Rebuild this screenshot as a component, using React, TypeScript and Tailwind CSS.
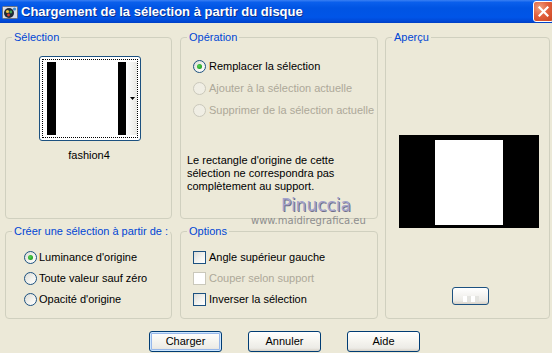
import React from "react";

function Radio({ checked = false, disabled = false }: { checked?: boolean; disabled?: boolean }) {
  return (
    <span
      className={
        "relative inline-flex w-[13px] h-[13px] shrink-0 items-center justify-center rounded-full border " +
        (disabled
          ? "border-[#CAC8BB] bg-[#F0EEE4]"
          : "border-[#1C5180] bg-[linear-gradient(135deg,#DCDCD5_0%,#F4F4F0_60%,#FFFFFF_100%)]")
      }
    >
      {checked && (
        <span className="w-[5px] h-[5px] rounded-full bg-[radial-gradient(circle_at_40%_40%,#55D155_0%,#21A121_70%,#1A8A1A_100%)]" />
      )}
    </span>
  );
}

function Check({ disabled = false }: { disabled?: boolean }) {
  return (
    <span
      className={
        "inline-block w-[13px] h-[13px] shrink-0 border " +
        (disabled
          ? "border-[#CAC8BB] bg-white"
          : "border-[#1C5180] bg-[linear-gradient(135deg,#DCDCD7_0%,#F5F5F2_60%,#FFFFFF_100%)]")
      }
    />
  );
}

function Group({
  label,
  className,
  children,
}: {
  label: string;
  className: string;
  children?: React.ReactNode;
}) {
  return (
    <fieldset className={"border border-[#D0D0BF] rounded-[4px] min-w-0 " + className}>
      <legend className="ml-[6px] px-[2px] leading-[13px] text-[#0046D5]">{label}</legend>
      {children}
    </fieldset>
  );
}

function XpButton({ label, isDefault = false }: { label: string; isDefault?: boolean }) {
  return (
    <button
      className={
        "w-[73px] h-[21px] rounded-[3px] border border-[#003C74] text-[11px] leading-none text-black bg-[linear-gradient(to_bottom,#FFFFFF_0%,#F5F4EF_50%,#ECEBE6_85%,#D6D0C5_100%)] " +
        (isDefault ? "shadow-[inset_0_0_0_1px_#CEE7FF,inset_0_0_0_2px_#98B8EA]" : "")
      }
    >
      {label}
    </button>
  );
}

function TitleBar() {
  return (
    <div className="relative h-[23px] flex items-center overflow-hidden bg-[linear-gradient(to_bottom,#3A80F3_0%,#0A5FEC_10%,#0054E3_35%,#0055E8_75%,#0048D6_92%,#003FC4_100%)]">
      <svg width="16" height="13" viewBox="0 0 16 13" className="ml-[2px] mt-[1px]">
        <rect x="0.5" y="0.5" width="15" height="12" rx="1" fill="#D8DCE4" stroke="#6A7280" />
        <circle cx="7" cy="7" r="5" fill="#1E2A38" />
        <circle cx="5.5" cy="5.5" r="1.6" fill="#E8C040" />
        <circle cx="8.8" cy="6" r="1.4" fill="#3FA34D" />
        <circle cx="6.5" cy="9" r="1.4" fill="#D64030" />
        <circle cx="12.5" cy="3" r="1.6" fill="#3C8FD8" />
      </svg>
      <span className="ml-[3px] text-white font-bold text-[13px] font-['Liberation_Sans',Arial,sans-serif] [text-shadow:1px_1px_0_#0A2E8C]">
        Chargement de la sélection à partir du disque
      </span>
      <div className="absolute left-[533px] top-[1px] w-[21px] h-[21px] rounded-[3px] border border-white bg-[radial-gradient(circle_at_30%_30%,#F0A080_0%,#E2603E_45%,#C84420_100%)] flex items-center justify-center">
        <svg width="11" height="11" viewBox="0 0 11 11">
          <path d="M1.5 1.5 L9.5 9.5 M9.5 1.5 L1.5 9.5" stroke="white" strokeWidth="2.2" strokeLinecap="square" />
        </svg>
      </div>
    </div>
  );
}

export default function App() {
  return (
    <div className="relative w-[552px] h-[353px] overflow-hidden bg-[#ECE9D8] text-[11px] text-black font-['Liberation_Sans',Arial,sans-serif]">
      <TitleBar />

      <div className="flex pl-[5px] pt-[8px]">
        {/* left column */}
        <div className="w-[167px] flex flex-col">
          <Group label="Sélection" className="h-[188px]">
            <div className="mt-[12px] ml-[33px] w-[102px] h-[85px] rounded-[3px] border border-[#1C5180] bg-white p-[2px]">
              <div className="w-full h-full border border-dotted border-black flex pl-[4px] py-[2px]">
                <div className="w-[9px] bg-black" />
                <div className="w-[62px] bg-white" />
                <div className="w-[8px] bg-black" />
                <div className="flex-1 flex items-center justify-end pr-[2px] bg-[linear-gradient(to_right,#FFFFFF,#E8E8E4)]">
                  <svg width="5" height="3" viewBox="0 0 5 3">
                    <path d="M0 0 H5 L2.5 3 Z" fill="black" />
                  </svg>
                </div>
              </div>
            </div>
            <div className="mt-[8px] ml-[1px] text-center leading-[13px]">fashion4</div>
          </Group>

          <Group label="Créer une sélection à partir de :" className="h-[94px] mt-[6px]">
            <div className="mt-[9px] pl-[18px] flex flex-col">
              <label className="h-[21px] flex items-center gap-[2px]">
                <Radio checked />
                <span>Luminance d'origine</span>
              </label>
              <label className="h-[21px] flex items-center gap-[2px]">
                <Radio />
                <span>Toute valeur sauf zéro</span>
              </label>
              <label className="h-[21px] flex items-center gap-[2px]">
                <Radio />
                <span>Opacité d'origine</span>
              </label>
            </div>
          </Group>
        </div>

        {/* middle column */}
        <div className="w-[198px] ml-[8px] flex flex-col">
          <Group label="Opération" className="h-[188px]">
            <div className="mt-[11px] pl-[12px] flex flex-col">
              <label className="h-[22px] flex items-center gap-[3px]">
                <Radio checked />
                <span>Remplacer la sélection</span>
              </label>
              <label className="h-[22px] flex items-center gap-[3px] text-[#ACA899]">
                <Radio disabled />
                <span>Ajouter à la sélection actuelle</span>
              </label>
              <label className="h-[22px] flex items-center gap-[3px] text-[#ACA899]">
                <Radio disabled />
                <span>Supprimer de la sélection actuelle</span>
              </label>
            </div>
            <p className="mt-[33px] pl-[6px] pr-[20px] leading-[13px]">
              Le rectangle d'origine de cette sélection ne correspondra pas complètement au support.
            </p>
          </Group>

          <Group label="Options" className="h-[94px] mt-[6px]">
            <div className="mt-[9px] pl-[12px] flex flex-col">
              <label className="h-[21px] flex items-center gap-[3px]">
                <Check />
                <span>Angle supérieur gauche</span>
              </label>
              <label className="h-[21px] flex items-center gap-[3px] text-[#ACA899]">
                <Check disabled />
                <span>Couper selon support</span>
              </label>
              <label className="h-[21px] flex items-center gap-[3px]">
                <Check />
                <span>Inverser la sélection</span>
              </label>
            </div>
          </Group>
        </div>

        {/* right column */}
        <div className="w-[165px] ml-[7px]">
          <Group label="Aperçu" className="h-[288px]">
            <div className="mt-[91px] ml-[13px] w-[140px] h-[93px] bg-black pl-[36px] pt-[5px]">
              <div className="w-[68px] h-[85px] bg-white" />
            </div>
            <div className="mt-[59px] ml-[66px] w-[37px] h-[18px] rounded-[3px] border border-[#1C5180] bg-[linear-gradient(to_bottom,#FFFFFF,#ECEBE6_80%,#D6D0C5)] flex items-end justify-center pb-[2px]">
              <div className="w-[16px] h-[6px] bg-[repeating-linear-gradient(90deg,#FFFFFF_0px,#FFFFFF_4px,#E4E4E0_4px,#E4E4E0_8px)]" />
            </div>
          </Group>
        </div>
      </div>

      <div className="flex pl-[149px] mt-[12px] gap-[26px]">
        <XpButton label="Charger" isDefault />
        <XpButton label="Annuler" />
        <XpButton label="Aide" />
      </div>

      {/* watermark */}
      <div className="absolute left-[281px] top-[196px] text-[17px] leading-[19px] text-[#A3A3CC] font-['DejaVu_Sans',sans-serif] [text-shadow:1px_1px_0_#6E6E8A]">
        Pinuccia
      </div>
      <div className="absolute left-[251px] top-[215px] text-[10px] leading-[12px] text-[#8E8E8E] font-['DejaVu_Sans',sans-serif]">
        www.maidiregrafica.eu
      </div>
    </div>
  );
}
